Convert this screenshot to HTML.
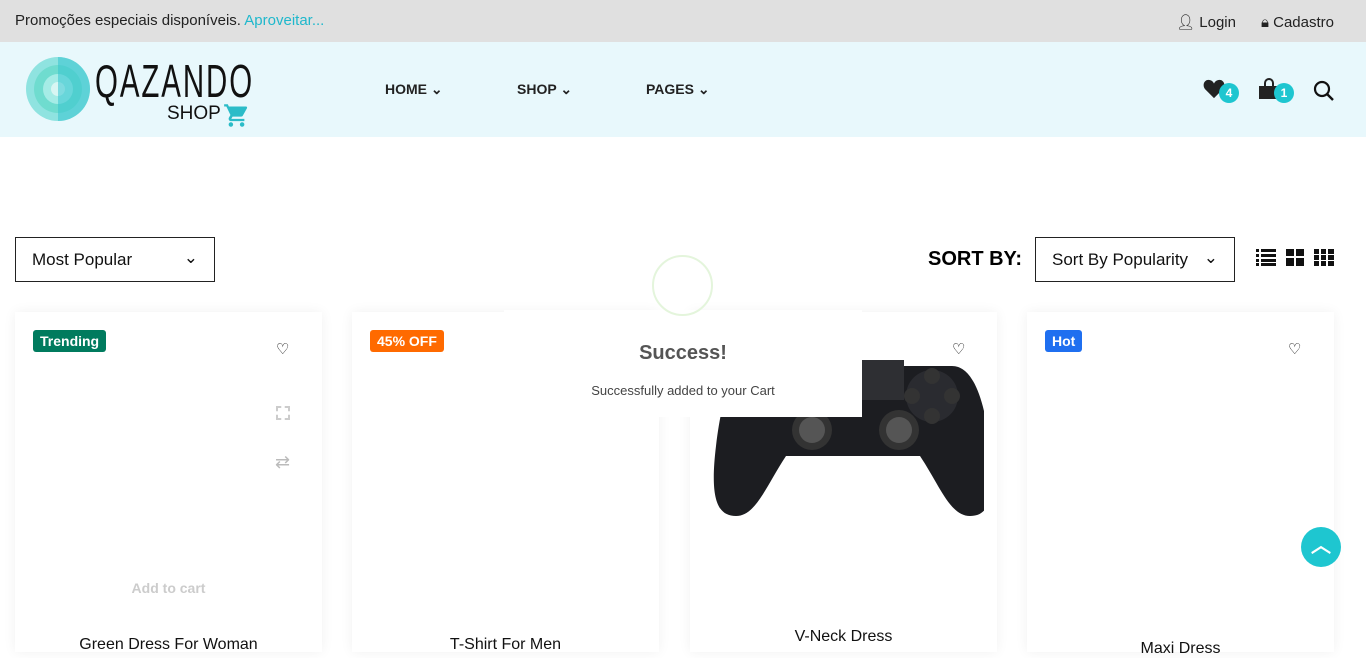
<!DOCTYPE html>
<html><head><meta charset="utf-8"><style>
*{margin:0;padding:0;box-sizing:border-box}
body{width:1366px;height:643px;overflow:hidden;background:#fff;font-family:"Liberation Sans",sans-serif;color:#000;position:relative}
.top{height:42px;background:#e0e0e0;font-size:15px;position:relative}
.top .l{position:absolute;left:15px;top:12px;color:#222}
.top .l span{color:#1fb8cc}
.top .r{position:absolute;right:32px;top:13px;font-size:15px;color:#222}
.hdr{height:95px;background:#e8f8fc;position:relative}
.nav{position:absolute;font-weight:bold;font-size:14px;color:#222}
.ab{position:absolute}
.badge{position:absolute;width:20px;height:20px;border-radius:50%;background:#1ec6d0;color:#fff;font-size:12px;font-weight:bold;text-align:center;line-height:20px}
.sel{position:absolute;top:237px;width:200px;height:45px;border:1px solid #222;font-size:17px;padding:12px 16px;color:#111}
.card{position:absolute;top:312px;width:307px;height:340px;background:#fff;box-shadow:0 0 12px rgba(0,0,0,.06)}
.tag{position:absolute;top:18px;left:18px;color:#fff;font-weight:bold;font-size:14px;padding:3px 7px;border-radius:3px}
.title{position:absolute;width:100%;text-align:center;font-size:16px;color:#111}
</style></head><body>
<div class="top"><div class="l">Promoções especiais disponíveis. <span>Aproveitar...</span></div>
<div class="r">&#x1F464;&#xFE0E; Login &nbsp;&nbsp;&nbsp;&nbsp; &#x1F512;&#xFE0E; Cadastro</div></div>
<div class="hdr">
<svg class="ab" style="left:25px;top:14px" width="66" height="66"><circle cx="33" cy="33" r="32" fill="#8fe3e0"/><circle cx="33" cy="33" r="24" fill="#6fdccf"/><circle cx="33" cy="33" r="15" fill="#a5ece6"/><circle cx="33" cy="33" r="7" fill="#d8f6f3"/><path d="M33 1 A32 32 0 0 1 33 65Z" fill="#36c5d0" opacity=".55"/></svg>
<div class="ab" style="left:95px;top:12px;font-size:46px;letter-spacing:3px;transform:scaleX(.64);transform-origin:left;color:#111;white-space:nowrap">QAZANDO</div>
<div class="ab" style="left:167px;top:61px;font-size:19px;color:#111">SHOP</div>
<svg class="ab" style="left:223px;top:60px" width="27" height="27" viewBox="0 0 24 24"><path fill="#2bbcc8" d="M7 18a2 2 0 1 0 0 4 2 2 0 0 0 0-4zM1 2v2h2l3.6 7.6L5.2 14c-.1.3-.2.6-.2 1 0 1.1.9 2 2 2h12v-2H7.4l1.1-2h7.5c.8 0 1.4-.4 1.7-1l3.6-6.5A1 1 0 0 0 20.4 4H5.2l-.9-2H1zm16 16a2 2 0 1 0 0 4 2 2 0 0 0 0-4z"/></svg>
<div class="nav" style="left:385px;top:39px">HOME ⌄</div>
<div class="nav" style="left:517px;top:39px">SHOP ⌄</div>
<div class="nav" style="left:646px;top:39px">PAGES ⌄</div>
<svg class="ab" style="left:1203px;top:37px" width="22" height="20" viewBox="0 0 24 22"><path fill="#222" d="M12 21 2 11C-1 7 1 1 6 1c3 0 5 2 6 4 1-2 3-4 6-4 5 0 7 6 4 10z"/></svg>
<div class="badge" style="left:1219px;top:41px">4</div>
<svg class="ab" style="left:1258px;top:36px" width="22" height="22" viewBox="0 0 22 22"><path fill="none" stroke="#222" stroke-width="2" d="M7 8V5a4 4 0 0 1 8 0v3"/><rect x="1" y="8" width="20" height="13" fill="#222"/></svg>
<div class="badge" style="left:1274px;top:41px">1</div>
<svg class="ab" style="left:1313px;top:38px" width="22" height="22" viewBox="0 0 22 22"><circle cx="9" cy="9" r="7" fill="none" stroke="#111" stroke-width="2.2"/><path d="M14 14l6 6" stroke="#111" stroke-width="2.4"/></svg>
</div>
<div class="sel" style="left:15px">Most Popular<span style="position:absolute;right:16px;top:10px">⌄</span></div>
<div class="ab" style="left:928px;top:248px;font-size:20px;font-weight:bold">SORT BY:</div>
<div class="sel" style="left:1035px">Sort By Popularity<span style="position:absolute;right:16px;top:10px">⌄</span></div>
<svg class="ab" style="left:1256px;top:249px" width="80" height="18"><g fill="#111"><rect x="0" y="0" width="3" height="3"/><rect x="5" y="0" width="15" height="3"/><rect x="0" y="5" width="3" height="3"/><rect x="5" y="5" width="15" height="3"/><rect x="0" y="10" width="3" height="3"/><rect x="5" y="10" width="15" height="3"/><rect x="0" y="14" width="3" height="3"/><rect x="5" y="14" width="15" height="3"/><rect x="30" y="0" width="8" height="7"/><rect x="40" y="0" width="8" height="7"/><rect x="30" y="9" width="8" height="8"/><rect x="40" y="9" width="8" height="8"/><rect x="58" y="0" width="5" height="5"/><rect x="65" y="0" width="5" height="5"/><rect x="72" y="0" width="6" height="5"/><rect x="58" y="6" width="5" height="5"/><rect x="65" y="6" width="5" height="5"/><rect x="72" y="6" width="6" height="5"/><rect x="58" y="12" width="5" height="5"/><rect x="65" y="12" width="5" height="5"/><rect x="72" y="12" width="6" height="5"/></g></svg>

<div class="card" style="left:15px"><div class="tag" style="background:#007b5e">Trending</div>
<div class="ab" style="left:261px;top:28px;font-size:15px">♡</div>
<div class="ab" style="left:261px;top:94px;width:14px;height:14px;border:2px dashed #ccc"></div>
<div class="ab" style="left:260px;top:140px;color:#bbb;font-size:18px">⇄</div>
<div class="title" style="top:268px;color:#ccc;font-size:14px;font-weight:bold">Add to cart</div>
<div class="title" style="top:324px">Green Dress For Woman</div></div>
<div class="card" style="left:352px"><div class="tag" style="background:#ff6a00">45% OFF</div><div class="title" style="top:324px">T-Shirt For Men</div></div>
<div class="card" style="left:690px">
<svg class="ab" style="left:22px;top:34px" width="272" height="170" viewBox="0 0 272 170"><path fill="#1c1d21" d="M40 20h200c20 0 32 30 38 80 6 50 0 70-20 70-20 0-30-30-50-60H74c-20 30-30 60-50 60C4 170-2 150 4 100 10 50 20 20 40 20z"/><circle cx="100" cy="84" r="20" fill="#333"/><circle cx="100" cy="84" r="13" fill="#555"/><circle cx="187" cy="84" r="20" fill="#333"/><circle cx="187" cy="84" r="13" fill="#555"/><circle cx="220" cy="50" r="26" fill="#2a2b30"/><circle cx="220" cy="30" r="8" fill="#333"/><circle cx="200" cy="50" r="8" fill="#333"/><circle cx="240" cy="50" r="8" fill="#333"/><circle cx="220" cy="70" r="8" fill="#333"/><rect x="130" y="14" width="62" height="40" fill="#2e2f33"/></svg>
<div class="ab" style="left:262px;top:28px;font-size:15px">♡</div>
<div class="title" style="top:316px">V-Neck Dress</div></div>
<div class="card" style="left:1027px"><div class="tag" style="background:#1f6ff0">Hot</div>
<div class="ab" style="left:261px;top:28px;font-size:15px">♡</div><div class="title" style="top:328px">Maxi Dress</div></div>

<div class="ab" style="left:504px;top:310px;width:358px;height:107px;background:#fff"></div>
<div class="ab" style="left:652px;top:255px;width:61px;height:61px;border-radius:50%;border:2px solid #e4f5dc"></div>
<div class="ab" style="left:504px;top:342px;width:358px;text-align:center;font-size:20px;font-weight:bold;color:#555">Success!</div>
<div class="ab" style="left:504px;top:383px;width:358px;text-align:center;font-size:13px;color:#444">Successfully added to your Cart</div>
<div class="ab" style="left:1301px;top:527px;width:40px;height:40px;border-radius:50%;background:#1ec6d0;color:#fff;text-align:center;font-size:20px;line-height:38px;font-weight:bold">︿</div>
</body></html>
